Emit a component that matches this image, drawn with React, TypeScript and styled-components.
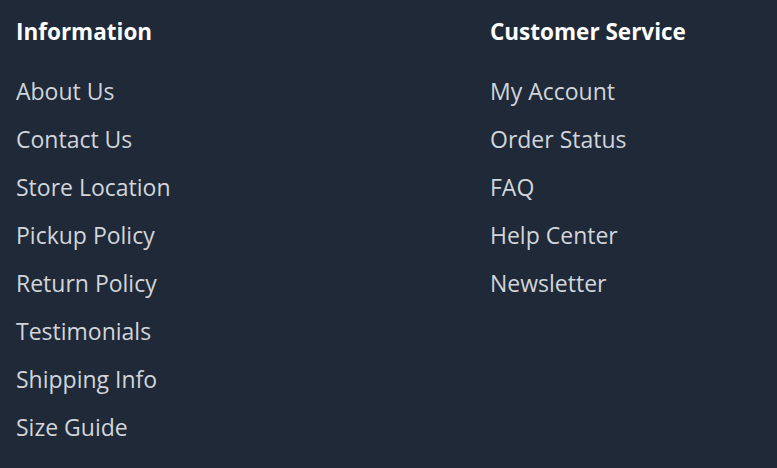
import React from "react";
import styled, { createGlobalStyle } from "styled-components";

const Global = createGlobalStyle`
  html, body { margin: 0; padding: 0; background: #1f2937; }
  body { font-family: "Open Sans", "Noto Sans", sans-serif; }
`;

const Footer = styled.footer`
  display: grid;
  grid-template-columns: 474px 1fr;
  padding: 16px 16px;
  background: #1f2937;
  min-height: 468px;
  box-sizing: border-box;
`;

const Column = styled.section`
  display: flex;
  flex-direction: column;
`;

const Heading = styled.h3`
  margin: 0 0 29px;
  font-size: 22.5px;
  line-height: 32px;
  font-weight: 700;
  color: #ffffff;
`;

const List = styled.ul`
  list-style: none;
  margin: 0;
  padding: 0;
  display: flex;
  flex-direction: column;
  gap: 20px;
`;

const Link = styled.a`
  display: block;
  font-size: 23px;
  line-height: 28px;
  color: #d1d5db;
  text-decoration: none;
`;

const info = [
  "About Us",
  "Contact Us",
  "Store Location",
  "Pickup Policy",
  "Return Policy",
  "Testimonials",
  "Shipping Info",
  "Size Guide",
];
const service = ["My Account", "Order Status", "FAQ", "Help Center", "Newsletter"];

export default function App() {
  return (
    <>
      <Global />
      <Footer>
        <Column>
          <Heading>Information</Heading>
          <List>
            {info.map((t) => (
              <li key={t}>
                <Link href="#">{t}</Link>
              </li>
            ))}
          </List>
        </Column>
        <Column>
          <Heading>Customer Service</Heading>
          <List>
            {service.map((t) => (
              <li key={t}>
                <Link href="#">{t}</Link>
              </li>
            ))}
          </List>
        </Column>
      </Footer>
    </>
  );
}
